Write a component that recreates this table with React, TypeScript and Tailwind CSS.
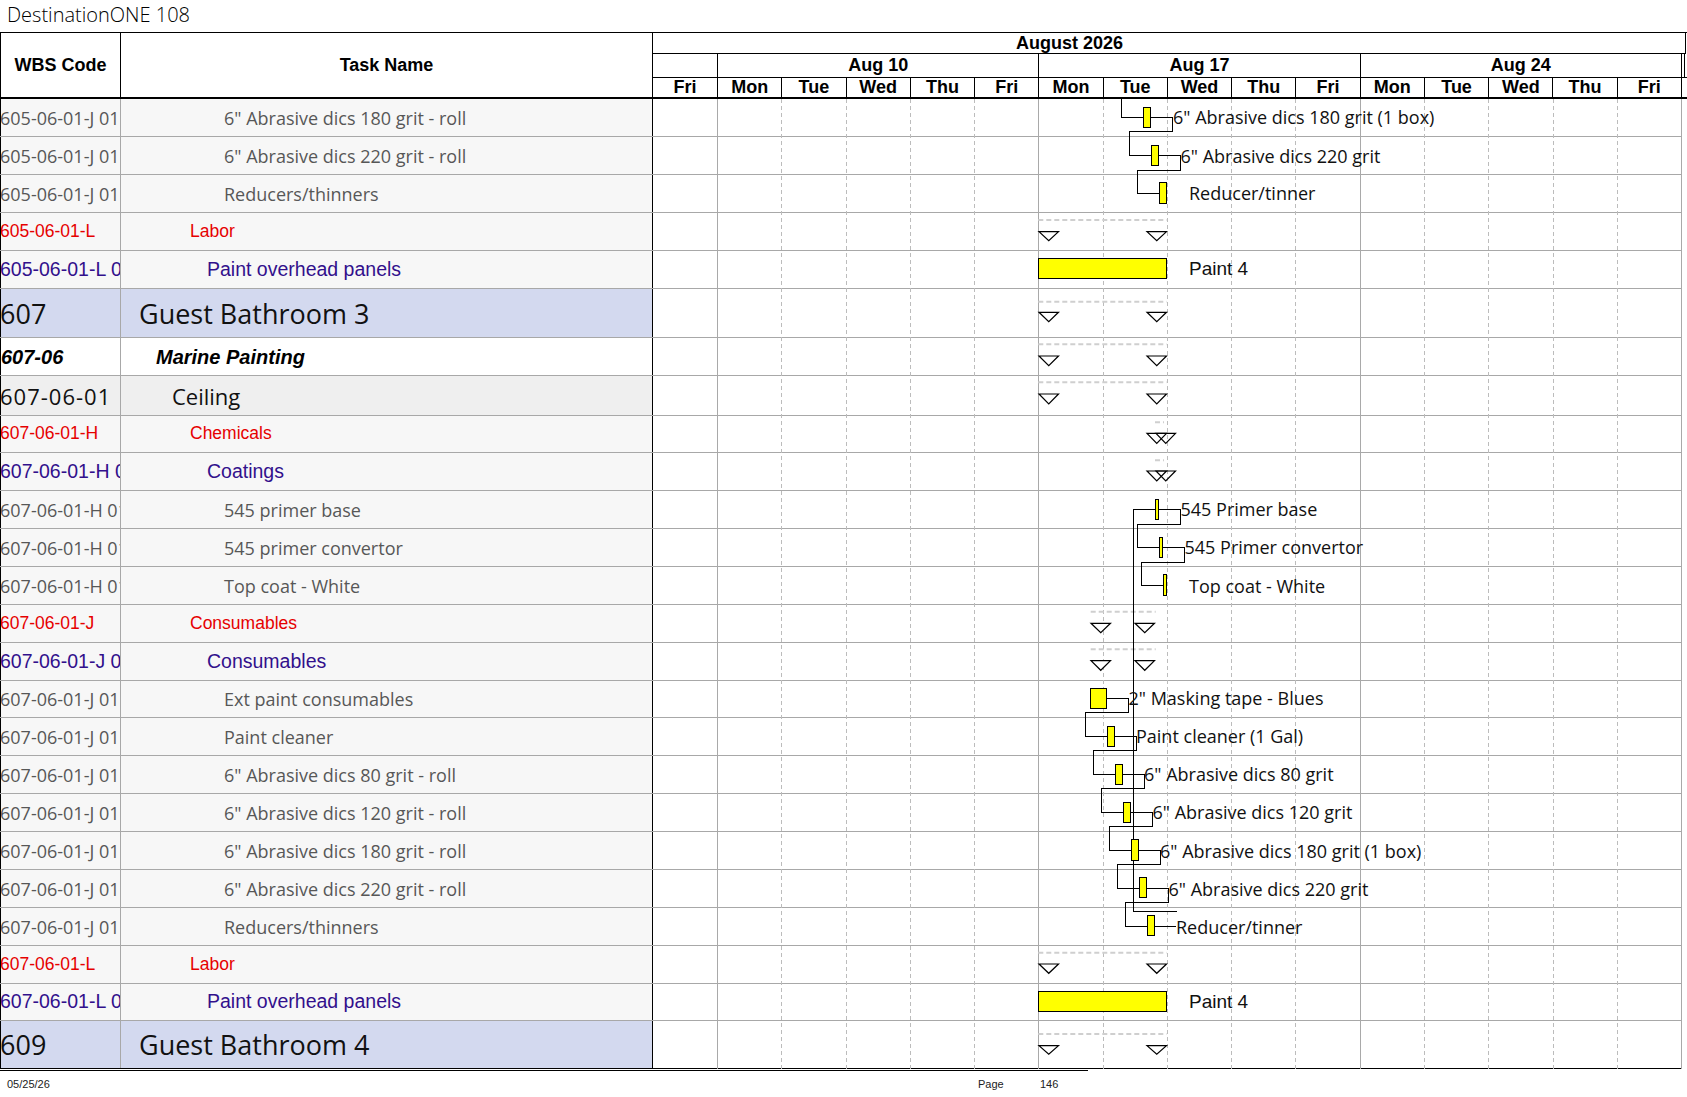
type Kind = "item" | "red" | "purple" | "big" | "group" | "sub";

interface Row {
  code: string;
  name: string;
  kind: Kind;
  h: string;
}

const rows: Row[] = [
  { code: "605-06-01-J 01", name: '6" Abrasive dics 180 grit - roll', kind: "item", h: "h-[38px]" },
  { code: "605-06-01-J 01", name: '6" Abrasive dics 220 grit - roll', kind: "item", h: "h-[38px]" },
  { code: "605-06-01-J 01", name: "Reducers/thinners", kind: "item", h: "h-[38px]" },
  { code: "605-06-01-L", name: "Labor", kind: "red", h: "h-[38px]" },
  { code: "605-06-01-L 01", name: "Paint overhead panels", kind: "purple", h: "h-[38px]" },
  { code: "607", name: "Guest Bathroom 3", kind: "big", h: "h-[49px]" },
  { code: "607-06", name: "Marine Painting", kind: "group", h: "h-[38px]" },
  { code: "607-06-01", name: "Ceiling", kind: "sub", h: "h-[40px]" },
  { code: "607-06-01-H", name: "Chemicals", kind: "red", h: "h-[37px]" },
  { code: "607-06-01-H 01", name: "Coatings", kind: "purple", h: "h-[38px]" },
  { code: "607-06-01-H 01 01", name: "545 primer base", kind: "item", h: "h-[38px]" },
  { code: "607-06-01-H 01 02", name: "545 primer convertor", kind: "item", h: "h-[38px]" },
  { code: "607-06-01-H 01 03", name: "Top coat - White", kind: "item", h: "h-[38px]" },
  { code: "607-06-01-J", name: "Consumables", kind: "red", h: "h-[38px]" },
  { code: "607-06-01-J 01", name: "Consumables", kind: "purple", h: "h-[38px]" },
  { code: "607-06-01-J 01 01", name: "Ext paint consumables", kind: "item", h: "h-[37px]" },
  { code: "607-06-01-J 01 02", name: "Paint cleaner", kind: "item", h: "h-[38px]" },
  { code: "607-06-01-J 01 03", name: '6" Abrasive dics 80 grit - roll', kind: "item", h: "h-[38px]" },
  { code: "607-06-01-J 01 04", name: '6" Abrasive dics 120 grit - roll', kind: "item", h: "h-[38px]" },
  { code: "607-06-01-J 01 05", name: '6" Abrasive dics 180 grit - roll', kind: "item", h: "h-[38px]" },
  { code: "607-06-01-J 01 06", name: '6" Abrasive dics 220 grit - roll', kind: "item", h: "h-[38px]" },
  { code: "607-06-01-J 01 07", name: "Reducers/thinners", kind: "item", h: "h-[38px]" },
  { code: "607-06-01-L", name: "Labor", kind: "red", h: "h-[38px]" },
  { code: "607-06-01-L 01", name: "Paint overhead panels", kind: "purple", h: "h-[37px]" },
  { code: "609", name: "Guest Bathroom 4", kind: "big", h: "h-[48px]" },
];

const fontStyle: Record<Kind, string> = {
  item: "font-['Open_Sans',sans-serif] text-[18px] text-[#575757]",
  red: "font-['Liberation_Sans',Arial,sans-serif] text-[17.5px] text-[#e60000]",
  purple: "font-['Liberation_Sans',Arial,sans-serif] text-[19.5px] text-[#32108c]",
  big: "font-['Open_Sans',sans-serif] text-[27px] text-[#111]",
  group: "font-['Liberation_Sans',Arial,sans-serif] text-[20px] font-bold italic text-black",
  sub: "font-['Open_Sans',sans-serif] text-[22px] text-[#111]",
};

const codeExtra: Record<Kind, string> = {
  item: "-ml-[1px]",
  red: "-ml-[1px]",
  purple: "-ml-[1px]",
  big: "-ml-[1px]",
  group: "",
  sub: "-ml-[1px] tracking-[1px]",
};

const namePad: Record<Kind, string> = {
  item: "pl-[103px]",
  red: "pl-[69px]",
  purple: "pl-[86px]",
  big: "pl-[18px]",
  group: "pl-[35px]",
  sub: "pl-[51px]",
};

const rowBg: Record<Kind, string> = {
  item: "bg-[#f7f7f7]",
  red: "bg-[#f7f7f7]",
  purple: "bg-[#f7f7f7]",
  big: "bg-[#d3d9ef]",
  group: "bg-white",
  sub: "bg-[#efefef]",
};

const days = ["Fri", "Mon", "Tue", "Wed", "Thu", "Fri", "Mon", "Tue", "Wed", "Thu", "Fri", "Mon", "Tue", "Wed", "Thu", "Fri"];

// gantt drawing, page coordinates (left 653, top 99)
const bars: [number, number, number, number][] = [
  [1143.3, 1150.3, 107.3, 127.3],
  [1151.7, 1158.7, 145, 165.3],
  [1159.3, 1166.7, 182.3, 203.3],
  [1038.3, 1166.7, 258.3, 278.3],
  [1155, 1158.7, 499, 519.3],
  [1159.3, 1162.7, 537, 557.3],
  [1163.3, 1166.7, 574.3, 595],
  [1090.7, 1106.7, 688.3, 708.3],
  [1107.3, 1114.3, 726.7, 746],
  [1115.7, 1122.3, 764.3, 784.3],
  [1123.3, 1130.3, 802.3, 822.3],
  [1131.3, 1138.3, 839.3, 860],
  [1139.3, 1146.7, 877.3, 897.3],
  [1147.3, 1154.7, 915.3, 935.3],
  [1038.3, 1166.7, 991.7, 1011],
];

const links: number[][] = [
  [1121.7, 99, 1121.7, 117.3, 1143.3, 117.3],
  [1150.3, 117.3, 1172.7, 117.3, 1172.7, 131.7, 1129.3, 131.7, 1129.3, 155.7, 1151.7, 155.7],
  [1158.7, 155.7, 1180, 155.7, 1180, 170, 1137.3, 170, 1137.3, 193.3, 1159.3, 193.3],
  [1176.7, 911, 1133.3, 911, 1133.3, 509, 1155, 509],
  [1158.7, 509, 1180, 509, 1180, 524.3, 1137.3, 524.3, 1137.3, 547.3, 1159.3, 547.3],
  [1162.7, 547.3, 1184, 547.3, 1184, 562.3, 1141.3, 562.3, 1141.3, 585.7, 1163.3, 585.7],
  [1106.7, 698.3, 1128.3, 698.3, 1128.3, 712.3, 1085.7, 712.3, 1085.7, 736, 1107.3, 736],
  [1114.3, 736, 1136, 736, 1136, 750.7, 1093.3, 750.7, 1093.3, 774.3, 1115.7, 774.3],
  [1122.3, 774.3, 1144, 774.3, 1144, 788.3, 1101.3, 788.3, 1101.3, 812.3, 1123.3, 812.3],
  [1130.3, 812.3, 1152.3, 812.3, 1152.3, 826.7, 1109.3, 826.7, 1109.3, 850.7, 1131.3, 850.7],
  [1138.3, 850.7, 1160, 850.7, 1160, 864.3, 1117.3, 864.3, 1117.3, 888.7, 1139.3, 888.7],
  [1146.7, 888.7, 1168.3, 888.7, 1168.3, 902.7, 1125.3, 902.7, 1125.3, 926.7, 1147.3, 926.7],
  [1154.7, 926.7, 1176, 926.7],
];

const labels: [number, number, string, boolean?][] = [
  [1173, 117.3, '6" Abrasive dics 180 grit (1 box)'],
  [1180.5, 155.7, '6" Abrasive dics 220 grit'],
  [1189, 193.3, "Reducer/tinner"],
  [1189, 268.3, "Paint 4", true],
  [1180.5, 509, "545 Primer base"],
  [1184.5, 547.3, "545 Primer convertor"],
  [1189, 585.7, "Top coat - White"],
  [1128.5, 698.3, '2" Masking tape - Blues'],
  [1136, 736, "Paint cleaner (1 Gal)"],
  [1144, 774.3, '6" Abrasive dics 80 grit'],
  [1152.5, 812.3, '6" Abrasive dics 120 grit'],
  [1160, 850.7, '6" Abrasive dics 180 grit (1 box)'],
  [1168.5, 888.7, '6" Abrasive dics 220 grit'],
  [1176, 926.7, "Reducer/tinner"],
  [1189, 1001.3, "Paint 4", true],
];

const summaries: { x1: number; x2: number; dy: number; t1: number; t2: number; tris: number[]; dbl?: boolean }[] = [
  { x1: 1038.3, x2: 1166.7, dy: 220, t1: 231.7, t2: 240.7, tris: [1039, 1147] },
  { x1: 1038.3, x2: 1166.7, dy: 301.7, t1: 312.3, t2: 321.7, tris: [1039, 1147] },
  { x1: 1038.3, x2: 1166.7, dy: 344.3, t1: 356, t2: 365.7, tris: [1039, 1147] },
  { x1: 1038.3, x2: 1166.7, dy: 382.3, t1: 394, t2: 404, tris: [1039, 1147] },
  { x1: 1155, x2: 1164, dy: 422.3, t1: 433.3, t2: 443.3, tris: [1147, 1156], dbl: true },
  { x1: 1155, x2: 1164, dy: 460.3, t1: 471, t2: 481, tris: [1147, 1156], dbl: true },
  { x1: 1090.7, x2: 1155.7, dy: 611.7, t1: 623.3, t2: 632.7, tris: [1091, 1135] },
  { x1: 1090.7, x2: 1155.7, dy: 649.3, t1: 660.7, t2: 670.3, tris: [1091, 1135] },
  { x1: 1038.3, x2: 1166.7, dy: 952.7, t1: 964, t2: 973.3, tris: [1039, 1147] },
  { x1: 1038.3, x2: 1166.7, dy: 1034, t1: 1045.7, t2: 1054.3, tris: [1039, 1147] },
];

function GanttDrawing() {
  const cols = Array.from({ length: 16 }, (_, k) => Math.round(717 + k * 64.27) + 0.5);
  return (
    <svg width={1029} height={970} className="pointer-events-none absolute left-[653px] top-0">
      <g transform="translate(-653 -99)">
        {cols.map((x, k) => (
          <line
            key={k}
            x1={x}
            x2={x}
            y1={99}
            y2={1069}
            stroke={k % 5 === 0 ? "#a9a9a9" : "#bcbcbc"}
            strokeDasharray={k % 5 === 0 ? undefined : "4 3"}
            strokeWidth={1}
          />
        ))}
        {summaries.map((s, i) => (
          <g key={i}>
            <line x1={s.x1} x2={s.x2} y1={s.dy} y2={s.dy} stroke="#cfcfcf" strokeWidth={2} strokeDasharray="5 3" />
            {s.tris.map((tx, j) => (
              <polygon
                key={j}
                points={`${tx},${s.t1} ${tx + 19.5},${s.t1} ${tx + 9.75},${s.t2}`}
                fill={s.dbl && j === 1 ? "none" : "white"}
                stroke="black"
                strokeWidth={1.2}
              />
            ))}
          </g>
        ))}
        {links.map((p, i) => (
          <polyline
            key={i}
            points={p.reduce<string[]>((acc, v, idx) => (idx % 2 === 0 ? [...acc, `${v},${p[idx + 1]}`] : acc), []).join(" ")}
            fill="none"
            stroke="black"
            strokeWidth={1}
            shapeRendering="crispEdges"
          />
        ))}
        {bars.map(([x1, x2, y1, y2], i) => (
          <rect key={i} x={x1} y={y1} width={x2 - x1} height={y2 - y1} fill="#ffff00" stroke="black" strokeWidth={1} shapeRendering="crispEdges" />
        ))}
        {labels.map(([x, y, t, arial], i) => (
          <text
            key={i}
            x={x}
            y={y}
            dominantBaseline="central"
            fontFamily={arial ? "'Liberation Sans', Arial, sans-serif" : "'Open Sans', sans-serif"}
            fontSize={arial ? 19 : 18}
            fill="#111"
          >
            {t}
          </text>
        ))}
      </g>
    </svg>
  );
}

export default function App() {
  return (
    <div className="h-[1097px] w-[1687px] overflow-hidden bg-white text-black">
      <div className="h-[32px] pl-[7px] pt-[5px] font-['Open_Sans',sans-serif] text-[20px] font-light leading-[20px] text-black">
        DestinationONE 108
      </div>

      <div className="flex h-[67px] border-t border-b-2 border-black font-['Liberation_Sans',Arial,sans-serif] font-bold">
        <div className="flex w-[121px] shrink-0 items-center justify-center border-x border-black text-[18px]">WBS Code</div>
        <div className="flex w-[532px] shrink-0 items-center justify-center border-r border-black text-[18px]">Task Name</div>
        <div className="flex w-[1034px] shrink-0 flex-col text-[18px]">
          <div className="h-[21px] w-[1033px] border-r border-b border-black pl-[363px] leading-[20px]">August 2026</div>
          <div className="flex h-[24px] border-b border-black leading-[23px]">
            <div className="grid w-[1029px] grid-cols-[65px_repeat(3,minmax(0,1fr))]">
              <div className="border-r border-black" />
              {["Aug 10", "Aug 17", "Aug 24"].map((w) => (
                <div key={w} className="border-r border-black text-center">{w}</div>
              ))}
            </div>
            <div className="w-[3px] border-r border-black" />
          </div>
          <div className="grid h-[19px] w-[1029px] grid-cols-[65px_repeat(15,minmax(0,1fr))] leading-[19px]">
            {days.map((d, i) => (
              <div key={i} className="border-r border-black text-center">{d}</div>
            ))}
          </div>
        </div>
      </div>

      <div className="relative w-[1682px]">
        {rows.map((r, i) => (
          <div
            key={i}
            className={`flex ${r.h} border-b ${i === rows.length - 1 ? "border-black" : "border-[#a8a8a8]"}`}
          >
            <div className={`flex w-[121px] shrink-0 items-center overflow-hidden whitespace-nowrap border-l border-r border-l-black border-r-[#a8a8a8] leading-none ${rowBg[r.kind]} ${fontStyle[r.kind]}`}>
              <span className={codeExtra[r.kind]}>{r.code}</span>
            </div>
            <div className={`flex w-[532px] shrink-0 items-center whitespace-nowrap border-r border-black leading-none ${namePad[r.kind]} ${rowBg[r.kind]} ${fontStyle[r.kind]}`}>
              {r.name}
            </div>
            <div className="w-[1029px] shrink-0 bg-white" />
          </div>
        ))}
        <GanttDrawing />
      </div>
      <div className="mt-[1px] h-[1px] w-[1088px] bg-black" />

      <div className="flex pt-[7px] font-['Liberation_Sans',Arial,sans-serif] text-[11px] leading-[13px] text-[#222]">
        <div className="w-[978px] shrink-0 pl-[7px]">05/25/26</div>
        <div className="w-[62px] shrink-0">Page</div>
        <div>146</div>
      </div>
    </div>
  );
}
